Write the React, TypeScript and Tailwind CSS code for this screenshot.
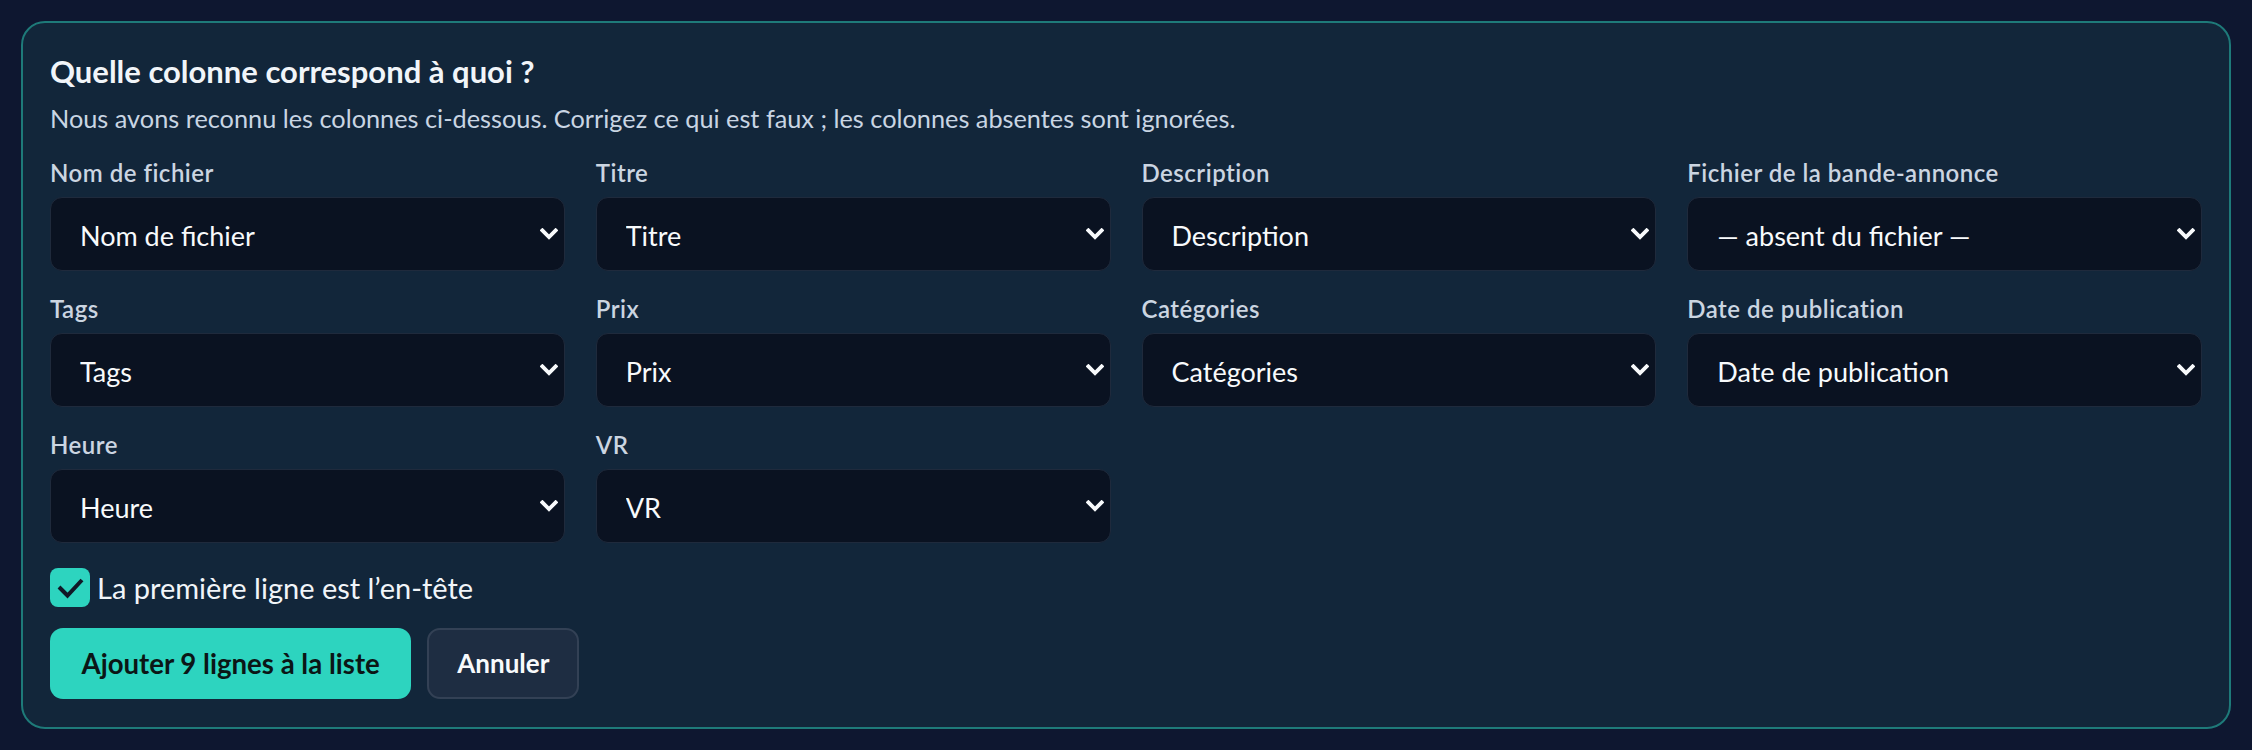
import { useState } from 'react';

const FIELDS = [
  { label: 'Nom de fichier', value: 'Nom de fichier' },
  { label: 'Titre', value: 'Titre' },
  { label: 'Description', value: 'Description' },
  { label: 'Fichier de la bande-annonce', value: '' },
  { label: 'Tags', value: 'Tags' },
  { label: 'Prix', value: 'Prix' },
  { label: 'Catégories', value: 'Catégories' },
  { label: 'Date de publication', value: 'Date de publication' },
  { label: 'Heure', value: 'Heure' },
  { label: 'VR', value: 'VR' },
];

const COLUMNS = FIELDS.map((f) => f.label).filter((l) => l !== 'Fichier de la bande-annonce');

function Chevron() {
  return (
    <svg width="18" height="12" viewBox="0 0 18 12" fill="none" className="block">
      <path d="M2.4 2.4 L9 9 L15.6 2.4" stroke="#f8fafc" strokeWidth="3.8" strokeLinecap="square" />
    </svg>
  );
}

function FieldSelect({ label, value }: { label: string; value: string }) {
  const [v, setV] = useState(value);
  return (
    <div className="flex flex-col">
      <label className="mb-[10px] text-[24px] leading-[28px] font-semibold tracking-[0.5px] text-[#cbd5e1]">{label}</label>
      <div className="relative">
        <select
          value={v}
          onChange={(e) => setV(e.target.value)}
          className="block h-[74px] w-full appearance-none rounded-[12px] border border-[#1f2a3c] bg-[#0a1221] pt-[4px] pl-[29px] pr-[40px] text-[27px] text-[#f8fafc] outline-none"
        >
          <option value="">— absent du fichier —</option>
          {COLUMNS.map((c) => (
            <option key={c} value={c}>
              {c}
            </option>
          ))}
        </select>
        <span className="pointer-events-none absolute right-[7px] top-1/2 -translate-y-1/2">
          <Chevron />
        </span>
      </div>
    </div>
  );
}

export default function App() {
  const [header, setHeader] = useState(true);

  return (
    <div className="min-h-screen bg-[#0e1730] p-[21px] font-['Lato','Noto_Sans',sans-serif]">
      <section className="rounded-[24px] border-2 border-[#1e7a79] bg-[#12263a] px-[27px] pt-[28px] pb-[28px]">
        <h2 className="text-[31px] leading-[40px] font-bold text-[#f1f5f9]">Quelle colonne correspond à quoi ?</h2>
        <p className="mt-[11px] text-[25.3px] leading-[32px] text-[#c9d5e3]">
          Nous avons reconnu les colonnes ci-dessous. Corrigez ce qui est faux ; les colonnes absentes sont ignorées.
        </p>

        <div className="mt-[25px] grid grid-cols-4 gap-x-[31px] gap-y-[24px]">
          {FIELDS.map((f) => (
            <FieldSelect key={f.label} label={f.label} value={f.value} />
          ))}
        </div>

        <label className="mt-[25px] flex items-center gap-[7px] text-[29px] leading-[39px] text-[#f1f5f9]">
          <input type="checkbox" checked={header} onChange={() => setHeader(!header)} className="sr-only" />
          <span className="flex h-[39px] w-[40px] items-center justify-center rounded-[8px] bg-[#2dd4bf]">
            {header && (
              <svg width="39" height="39" viewBox="0 0 39 39" fill="none">
                <path d="M8 19 L16.5 27.5 L31 12" stroke="#111827" strokeWidth="4" />
              </svg>
            )}
          </span>
          La première ligne est l’en-tête
        </label>

        <div className="mt-[21px] flex gap-[16px]">
          <button className="h-[71px] rounded-[13px] bg-[#2dd4bf] px-[31.5px] text-[27.6px] font-bold text-[#0b1616]">
            Ajouter 9 lignes à la liste
          </button>
          <button className="h-[71px] rounded-[13px] border-2 border-[#334155] bg-[#1e2d42] px-[28px] text-[26px] font-bold text-[#f8fafc]">
            Annuler
          </button>
        </div>
      </section>
    </div>
  );
}
